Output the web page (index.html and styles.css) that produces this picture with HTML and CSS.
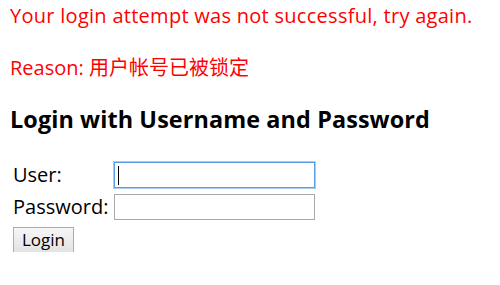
FILE: index.html
```html
<!DOCTYPE html>
<html>
<head>
<meta charset="utf-8">
<title>Login Page</title>
<link rel="stylesheet" href="styles.css">
</head>
<body>
<p class="error"><span class="error-main">Your login attempt was not successful, try again.</span><br><br>Reason: 用户帐号已被锁定</p>
<h3 class="title">Login with Username and Password</h3>
<form class="login-form" name="f" action="#" method="POST">
  <label class="label" for="user">User:</label>
  <span class="field-wrap"><input class="field field-focus" id="user" type="text" name="j_username" value=""><span class="caret"></span></span>
  <label class="label" for="pass">Password:</label>
  <span class="field-wrap"><input class="field" id="pass" type="password" name="j_password"></span>
  <span class="actions"><button class="btn" type="submit">Login</button></span>
</form>
</body>
</html>
```
FILE: styles.css
```css
html, body {
  background: #ffffff;
}
body {
  margin: 3px 10px 0 10px;
  font-family: "Open Sans", "Noto Sans CJK SC", sans-serif;
  font-size: 20px;
  line-height: 26px;
  color: #000000;
}
.error {
  margin: 0;
  color: #ff0000;
}
.error-main {
  letter-spacing: 0.28px;
}
.title {
  margin: 23px 0 0 0;
  font-size: 23.4px;
  line-height: 30px;
  font-weight: 700;
  letter-spacing: 0.1px;
}
.login-form {
  margin-top: 28px;
  display: grid;
  grid-template-columns: 101px 201px;
  grid-auto-rows: 26px;
  row-gap: 6px;
  padding-left: 3px;
}
.label {
  display: flex;
  align-items: center;
}
.field-wrap {
  position: relative;
  display: block;
}
.field {
  box-sizing: border-box;
  display: block;
  width: 201px;
  height: 26px;
  margin: 0;
  padding: 0 3px;
  border: 1px solid #a9a9a9;
  background: #ffffff;
  font-family: inherit;
  font-size: 16px;
  outline: none;
}
.field-focus {
  border: 1px solid #5c9de8;
  box-shadow: 0 0 0 1px #a9cbf2;
}
.caret {
  position: absolute;
  left: 4px;
  top: 4px;
  width: 1px;
  height: 19px;
  background: #000000;
}
.actions {
  grid-column: 1 / span 2;
}
.btn {
  box-sizing: border-box;
  width: 61px;
  height: 26px;
  margin: 0;
  padding: 0 0 1px 0;
  border: 1px solid #adadad;
  border-radius: 0;
  background: linear-gradient(#f6f6f6, #e3e3e3);
  font-family: "Open Sans", sans-serif;
  font-size: 17px;
  color: #000000;
}
```
